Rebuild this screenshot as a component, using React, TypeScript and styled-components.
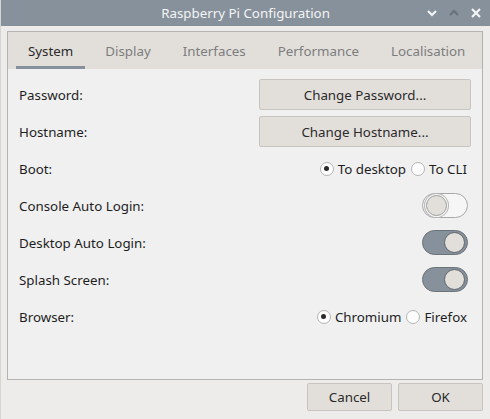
import styled, { createGlobalStyle } from "styled-components";

const GlobalStyle = createGlobalStyle`
  html, body {
    margin: 0;
    padding: 0;
    background: #edecea;
  }
  body {
    font-family: "Noto Sans", "Open Sans", sans-serif;
    font-size: 13.33px;
    color: #1e1e1e;
  }
`;

const Window = styled.div`
  width: 490px;
  height: 419px;
  display: flex;
  flex-direction: column;
  background: #edecea;
  box-sizing: border-box;
  border-left: 1px solid #d6d5d2;
`;

const TitleBar = styled.div`
  height: 26px;
  flex: none;
  background: #87919b;
  display: flex;
  align-items: center;
  justify-content: center;
  position: relative;
  color: #f3f4f5;
  font-size: 13.33px;
`;

const TitleControls = styled.div`
  position: absolute;
  right: 8px;
  top: 0;
  height: 26px;
  display: flex;
  align-items: center;
  gap: 10px;
`;

const Body = styled.div`
  flex: 1;
  display: flex;
  flex-direction: column;
  padding: 5px 7px 8px 6px;
  min-height: 0;
`;

const Frame = styled.div`
  flex: 1;
  display: flex;
  flex-direction: column;
  border: 1px solid #b3b3b1;
  background: #f0f0f0;
`;

const TabBar = styled.div`
  height: 37px;
  background: #e2dfdb;
  display: flex;
  align-items: stretch;
  padding: 0 8px;
  gap: 8px;
  flex: none;
`;

const Tab = styled.div<{ $active?: boolean }>`
  padding: 0 12px;
  display: flex;
  align-items: center;
  color: ${(p) => (p.$active ? "#2a2a2a" : "#7d7d7d")};
  border-bottom: 3px solid ${(p) => (p.$active ? "#87919b" : "transparent")};
  padding-top: 3px;
`;

const Content = styled.div`
  display: flex;
  flex-direction: column;
  gap: 6px;
  padding: 10px 11px 0 11px;
`;

const Row = styled.div`
  height: 31px;
  display: flex;
  align-items: center;
  justify-content: space-between;
`;

const Label = styled.span`
  color: #1e1e1e;
`;

const Button = styled.button<{ $width?: number }>`
  width: ${(p) => p.$width ?? 212}px;
  height: 100%;
  font-family: inherit;
  font-size: 13.33px;
  color: #2a2a2a;
  background: #e2dfdb;
  border: 1px solid #c8c5c1;
  border-radius: 2px;
  padding: 0;
`;

const RadioGroup = styled.div`
  display: flex;
  align-items: center;
  gap: 5px;
  padding-right: 4px;
`;

const RadioItem = styled.label`
  display: flex;
  align-items: center;
  gap: 4px;
`;

const RadioCircle = styled.span<{ $checked?: boolean }>`
  width: 14px;
  height: 14px;
  border-radius: 50%;
  box-sizing: border-box;
  border: 1px solid #b4b4b4;
  background: #fdfdfd;
  display: flex;
  align-items: center;
  justify-content: center;
  &::after {
    content: "";
    width: 5px;
    height: 5px;
    border-radius: 50%;
    background: ${(p) => (p.$checked ? "#2a2a2a" : "transparent")};
  }
`;

const Switch = styled.span<{ $on?: boolean }>`
  width: 46px;
  height: 25px;
  box-sizing: border-box;
  border-radius: 13px;
  border: 1px solid ${(p) => (p.$on ? "#6c737a" : "#a9a9a9")};
  background: ${(p) => (p.$on ? "#87919b" : "#f6f6f6")};
  display: flex;
  align-items: center;
  justify-content: ${(p) => (p.$on ? "flex-end" : "flex-start")};
  padding: 0 1px;
  margin-right: 3px;
  &::after {
    content: "";
    width: 19px;
    height: 19px;
    border-radius: 50%;
    background: #e2dfdb;
    border: 1px solid ${(p) => (p.$on ? "#5e656b" : "#9d9d9d")};
    box-shadow: ${(p) => (p.$on ? "none" : "0 0 0 1px #f6f6f6, 0 0 0 2px #b5b5b5")};
    margin: 0 1px;
    margin-left: ${(p) => (p.$on ? "0" : "2px")};
  }
`;

const Footer = styled.div`
  display: flex;
  justify-content: flex-end;
  gap: 6px;
  padding-top: 3px;
  height: 28px;
  flex: none;
`;

function Chevron({ up, color }: { up?: boolean; color: string }) {
  return (
    <svg width="12" height="12" viewBox="0 0 12 12">
      <path
        d={up ? "M2 8 L6 4 L10 8" : "M2 4 L6 8 L10 4"}
        fill="none"
        stroke={color}
        strokeWidth="2.2"
      />
    </svg>
  );
}

function Close() {
  return (
    <svg width="12" height="12" viewBox="0 0 12 12">
      <path d="M2 2 L10 10 M10 2 L2 10" stroke="#f3f4f5" strokeWidth="2.2" />
    </svg>
  );
}

export default function App() {
  return (
    <>
      <GlobalStyle />
      <Window>
        <TitleBar>
          Raspberry Pi Configuration
          <TitleControls>
            <Chevron color="#f3f4f5" />
            <Chevron up color="#6a737c" />
            <Close />
          </TitleControls>
        </TitleBar>
        <Body>
          <Frame>
            <TabBar>
              <Tab $active>System</Tab>
              <Tab>Display</Tab>
              <Tab>Interfaces</Tab>
              <Tab>Performance</Tab>
              <Tab>Localisation</Tab>
            </TabBar>
            <Content>
              <Row>
                <Label>Password:</Label>
                <Button>Change Password...</Button>
              </Row>
              <Row>
                <Label>Hostname:</Label>
                <Button>Change Hostname...</Button>
              </Row>
              <Row>
                <Label>Boot:</Label>
                <RadioGroup>
                  <RadioItem>
                    <RadioCircle $checked />
                    To desktop
                  </RadioItem>
                  <RadioItem>
                    <RadioCircle />
                    To CLI
                  </RadioItem>
                </RadioGroup>
              </Row>
              <Row>
                <Label>Console Auto Login:</Label>
                <Switch />
              </Row>
              <Row>
                <Label>Desktop Auto Login:</Label>
                <Switch $on />
              </Row>
              <Row>
                <Label>Splash Screen:</Label>
                <Switch $on />
              </Row>
              <Row>
                <Label>Browser:</Label>
                <RadioGroup>
                  <RadioItem>
                    <RadioCircle $checked />
                    Chromium
                  </RadioItem>
                  <RadioItem>
                    <RadioCircle />
                    Firefox
                  </RadioItem>
                </RadioGroup>
              </Row>
            </Content>
          </Frame>
          <Footer>
            <Button $width={85}>Cancel</Button>
            <Button $width={85}>OK</Button>
          </Footer>
        </Body>
      </Window>
    </>
  );
}
